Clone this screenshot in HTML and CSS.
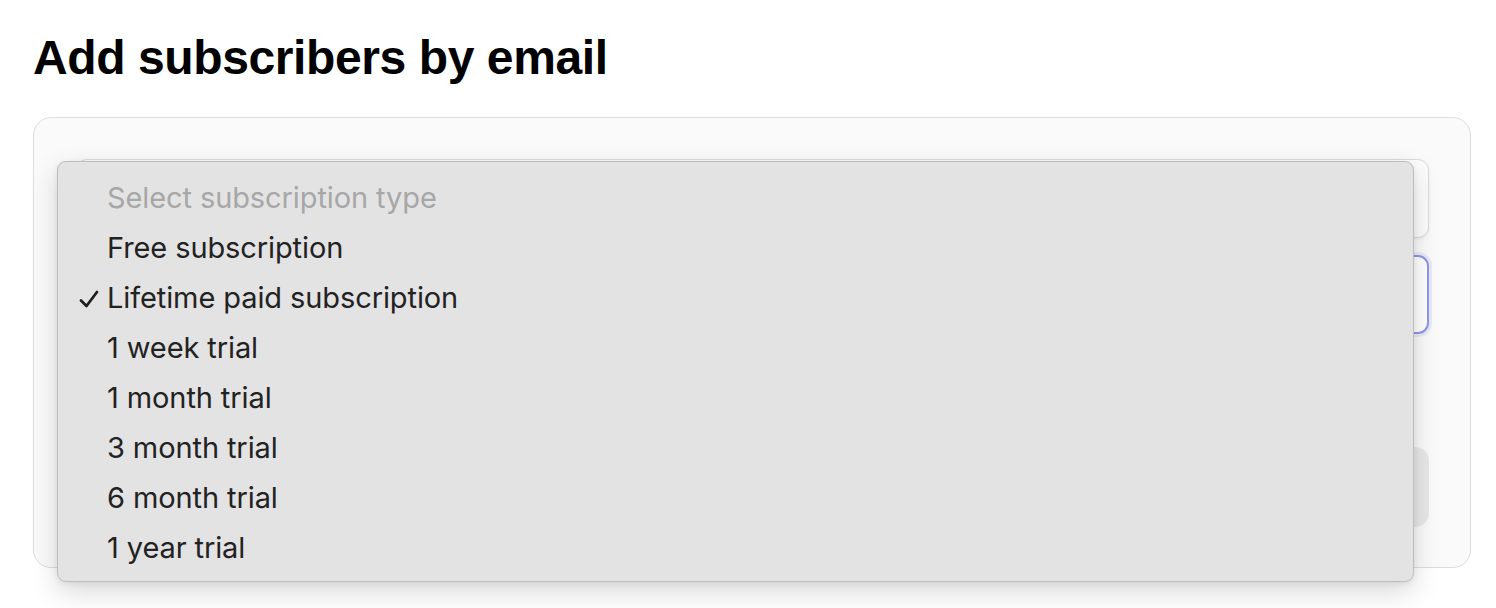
FILE: index.html
```html
<!DOCTYPE html>
<html lang="en">
<head>
  <meta charset="UTF-8" />
  <meta name="viewport" content="width=device-width, initial-scale=1.0" />
  <title>Add subscribers</title>
  <link rel="stylesheet" href="styles.css">
</head>
<body>
  <main class="page">
    <h1 class="title">Add subscribers by email</h1>

    <div class="card">
      <div class="field field-select"></div>
      <div class="field field-input"></div>
      <div class="spacer"></div>
      <div class="field field-button"></div>

      <ul class="menu">
        <li class="menu-item disabled">Select subscription type</li>
        <li class="menu-item">Free subscription</li>
        <li class="menu-item checked">
          <svg class="check" width="20" height="18" viewBox="0 0 20 18">
            <path d="M2 10.5 L7.5 16 L18 2" fill="none" stroke="#1f1f1f" stroke-width="2.8" stroke-linecap="round" stroke-linejoin="round"/>
          </svg>
          Lifetime paid subscription
        </li>
        <li class="menu-item">1 week trial</li>
        <li class="menu-item">1 month trial</li>
        <li class="menu-item">3 month trial</li>
        <li class="menu-item">6 month trial</li>
        <li class="menu-item">1 year trial</li>
      </ul>
    </div>
  </main>
</body>
</html>
```

FILE: styles.css
```css
* {
  box-sizing: border-box;
  margin: 0;
  padding: 0;
}

body {
  background-color: #ffffff;
  font-family: Inter, "Liberation Sans", Arial, sans-serif;
  color: #1f1f1f;
  min-height: 608px;
}

.page {
  padding: 30px 25px 40px 33px;
}

.title {
  font-family: "Liberation Sans", Arial, sans-serif;
  font-weight: bold;
  font-size: 48px;
  line-height: 56px;
  letter-spacing: -0.4px;
  color: #000;
  margin-bottom: 31px;
}

.card {
  position: relative;
  width: 1438px;
  height: 451px;
  padding: 41px 41px 41px 42px;
  background-color: #fafafa;
  border: 1.5px solid #dedede;
  border-radius: 18px;
  display: flex;
  flex-direction: column;
}

.field {
  border-radius: 11px;
  height: 79px;
  flex-shrink: 0;
}

.field-select {
  background-color: #fcfcfc;
  border: 1.5px solid #dcdcdc;
  box-shadow: 0 1px 3px rgba(0, 0, 0, 0.08);
}

.field-input {
  margin-top: 17px;
  background-color: #ffffff;
  border: 2px solid #8e96ea;
  box-shadow: 0 0 0 3px rgba(142, 150, 234, 0.15);
}

.spacer {
  height: 113px;
  flex-shrink: 0;
}

.field-button {
  height: 80px;
  background-color: #e8e8e8;
  border-radius: 14px;
}

.menu {
  position: absolute;
  left: 23px;
  top: 43px;
  width: 1357px;
  height: 421px;
  list-style: none;
  padding: 11px 0 10px;
  background-color: #e3e3e3;
  border: 1px solid #bdbdbd;
  border-radius: 9px;
  box-shadow: 0 10px 28px rgba(0, 0, 0, 0.15), 0 2px 6px rgba(0, 0, 0, 0.07);
  z-index: 2;
}

.menu-item {
  position: relative;
  height: 50px;
  line-height: 50px;
  padding-left: 49px;
  font-size: 29px;
  letter-spacing: -0.1px;
  color: #222;
}

.menu-item.disabled {
  color: #a7a7a7;
}

.check {
  position: absolute;
  left: 21px;
  top: 17px;
}
```
